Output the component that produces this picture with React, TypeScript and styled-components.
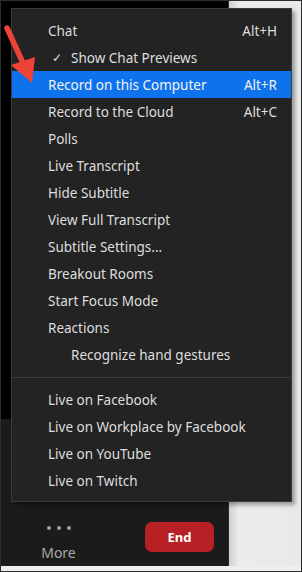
import React from 'react';
import styled, { createGlobalStyle } from 'styled-components';

const GlobalStyle = createGlobalStyle`
  html, body {
    margin: 0;
    padding: 0;
    background: #e8e8e8;
  }
  body {
    font-family: 'Noto Sans', 'Open Sans', sans-serif;
  }
`;

type MenuEntry =
  | { kind: 'item'; label: string; shortcut?: string; checked?: boolean; indent?: boolean; active?: boolean }
  | { kind: 'separator' };

const menuEntries: MenuEntry[] = [
  { kind: 'item', label: 'Chat', shortcut: 'Alt+H' },
  { kind: 'item', label: 'Show Chat Previews', checked: true, indent: true },
  { kind: 'item', label: 'Record on this Computer', shortcut: 'Alt+R', active: true },
  { kind: 'item', label: 'Record to the Cloud', shortcut: 'Alt+C' },
  { kind: 'item', label: 'Polls' },
  { kind: 'item', label: 'Live Transcript' },
  { kind: 'item', label: 'Hide Subtitle' },
  { kind: 'item', label: 'View Full Transcript' },
  { kind: 'item', label: 'Subtitle Settings...' },
  { kind: 'item', label: 'Breakout Rooms' },
  { kind: 'item', label: 'Start Focus Mode' },
  { kind: 'item', label: 'Reactions' },
  { kind: 'item', label: 'Recognize hand gestures', indent: true },
  { kind: 'separator' },
  { kind: 'item', label: 'Live on Facebook' },
  { kind: 'item', label: 'Live on Workplace by Facebook' },
  { kind: 'item', label: 'Live on YouTube' },
  { kind: 'item', label: 'Live on Twitch' },
];

const App: React.FC = () => {
  return (
    <>
      <GlobalStyle />
      <Frame>
        <Main>
          <LeftColumn>
            <MeetingArea />
            <Toolbar>
              <MoreButton>
                <Dots>
                  <Dot />
                  <Dot />
                  <Dot />
                </Dots>
                <MoreLabel>More</MoreLabel>
              </MoreButton>
              <EndButton>End</EndButton>
            </Toolbar>
          </LeftColumn>
          <RightFill />
        </Main>
        <BottomStrip />

        <Menu>
          {menuEntries.map((entry, index) =>
            entry.kind === 'separator' ? (
              <Separator key={index} />
            ) : (
              <MenuRow key={index} active={entry.active}>
                <MenuLabel indent={entry.indent}>
                  {entry.checked && <Check>✓</Check>}
                  {entry.label}
                </MenuLabel>
                {entry.shortcut && <Shortcut>{entry.shortcut}</Shortcut>}
              </MenuRow>
            )
          )}
        </Menu>

        <Arrow width="44" height="90" viewBox="0 0 44 90">
          <line x1="7" y1="28" x2="23" y2="63" stroke="#ee4137" strokeWidth="5.5" strokeLinecap="round" />
          <polygon points="11,65 35,57 32,83" fill="#ee4137" />
        </Arrow>
      </Frame>
    </>
  );
};

const Frame = styled.div`
  position: relative;
  width: 302px;
  height: 572px;
  box-sizing: border-box;
  border: 1px solid #2e2e2e;
  display: flex;
  flex-direction: column;
  overflow: hidden;
`;

const Main = styled.div`
  display: flex;
  height: 565px;
`;

const LeftColumn = styled.div`
  width: 227px;
  display: flex;
  flex-direction: column;
  border-right: 1px solid #2a2a2a;
`;

const MeetingArea = styled.div`
  flex: 1;
  background: #000;
`;

const Toolbar = styled.div`
  height: 147px;
  background: #1b1b1b;
  display: flex;
  align-items: flex-end;
  padding: 0 0 5px 35px;
  box-sizing: border-box;
  gap: 64px;
`;

const MoreButton = styled.div`
  display: flex;
  flex-direction: column;
  align-items: center;
  gap: 15px;
  width: 45px;
`;

const Dots = styled.div`
  display: flex;
  gap: 6px;
`;

const Dot = styled.span`
  width: 4px;
  height: 4px;
  border-radius: 50%;
  background: #9e9e9e;
`;

const MoreLabel = styled.span`
  font-size: 14px;
  color: #a9a9a9;
  line-height: 16px;
`;

const EndButton = styled.div`
  width: 69px;
  height: 30px;
  margin-bottom: 9px;
  border-radius: 7px;
  background: #b72126;
  color: #fff;
  font-weight: 700;
  font-size: 13px;
  display: flex;
  align-items: center;
  justify-content: center;
`;

const RightFill = styled.div`
  flex: 1;
  background: linear-gradient(to right, #cfcfcf 0px, #ececec 10px, #e9e9e9 100%);
`;

const BottomStrip = styled.div`
  flex: 1;
  background: #eeeeee;
`;

const Menu = styled.div`
  position: absolute;
  left: 10px;
  top: 7px;
  width: 281px;
  box-sizing: border-box;
  background: #232323;
  border: 1px solid #3b3b3b;
  padding: 8px 14px 7px 0;
  box-shadow: 3px 3px 4px rgba(0, 0, 0, 0.35);
`;

const MenuRow = styled.div<{ active?: boolean }>`
  height: 27px;
  display: flex;
  align-items: center;
  justify-content: space-between;
  padding-left: 36px;
  margin-right: -14px;
  padding-right: 14px;
  background: ${({ active }) => (active ? '#0e72ed' : 'transparent')};
  color: ${({ active }) => (active ? '#f2f2f2' : '#dedede')};
  font-size: 13.5px;
`;

const MenuLabel = styled.span<{ indent?: boolean }>`
  position: relative;
  padding-left: ${({ indent }) => (indent ? '23px' : '0')};
  white-space: nowrap;
`;

const Check = styled.span`
  position: absolute;
  left: 4px;
  font-size: 12px;
`;

const Shortcut = styled.span`
  white-space: nowrap;
`;

const Separator = styled.div`
  height: 18px;
  display: flex;
  align-items: center;
  margin-right: -14px;

  &::after {
    content: '';
    flex: 1;
    height: 1px;
    background: #393939;
  }
`;

const Arrow = styled.svg`
  position: absolute;
  left: -1px;
  top: -1px;
`;

export default App;
